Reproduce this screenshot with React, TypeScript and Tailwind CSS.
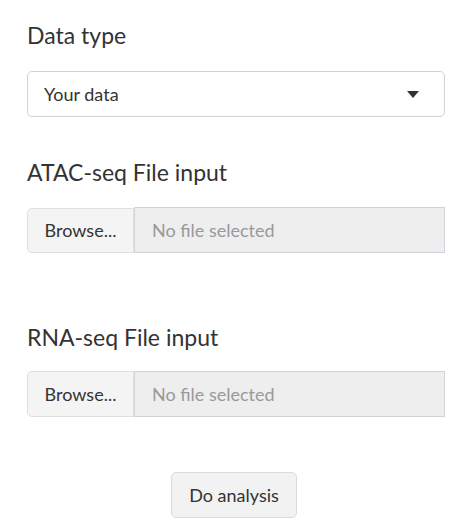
export default function App() {
  const font = { fontFamily: "Lato, 'Noto Sans', sans-serif" };
  return (
    <div className="w-[468px] h-[524px] bg-white text-[#333]" style={font}>
      <div className="px-[27px] pt-[21px]">
        <div className="text-[23px] leading-[28px] mb-[22px]">Data type</div>
        <div className="h-[46px] w-[418px] border border-[#d3d3d3] rounded-[5px] flex items-center justify-between pl-[16px] pr-[25px]">
          <span className="text-[18px]">Your data</span>
          <svg width="12" height="7" viewBox="0 0 12 7"><path d="M0 0h12L6 7z" fill="#333" /></svg>
        </div>

        <div className="text-[23px] leading-[28px] mt-[41px] mb-[21px]">ATAC-seq File input</div>
        <div className="flex w-[418px] h-[46px]">
          <div className="w-[107px] h-[45px] mt-[1px] bg-[#f4f4f4] border border-[#e0e0e0] rounded-l-[5px] flex items-center justify-center text-[18px]">Browse...</div>
          <div className="flex-1 bg-[#eeeeee] border border-[#ced4da] flex items-center pl-[17px] text-[18px] text-[#999]">No file selected</div>
        </div>

        <div className="text-[23px] leading-[28px] mt-[70px] mb-[20px]">RNA-seq File input</div>
        <div className="flex w-[418px] h-[46px]">
          <div className="w-[107px] bg-[#f4f4f4] border border-[#e0e0e0] rounded-l-[5px] flex items-center justify-center text-[18px]">Browse...</div>
          <div className="flex-1 bg-[#eeeeee] border border-[#ced4da] flex items-center pl-[17px] text-[18px] text-[#999]">No file selected</div>
        </div>

        <div className="flex justify-center mt-[55px]">
          <div className="w-[126px] h-[46px] bg-[#f2f2f2] border border-[#dcdcdc] rounded-[5px] flex items-center justify-center text-[18px]">Do analysis</div>
        </div>
      </div>
    </div>
  );
}
